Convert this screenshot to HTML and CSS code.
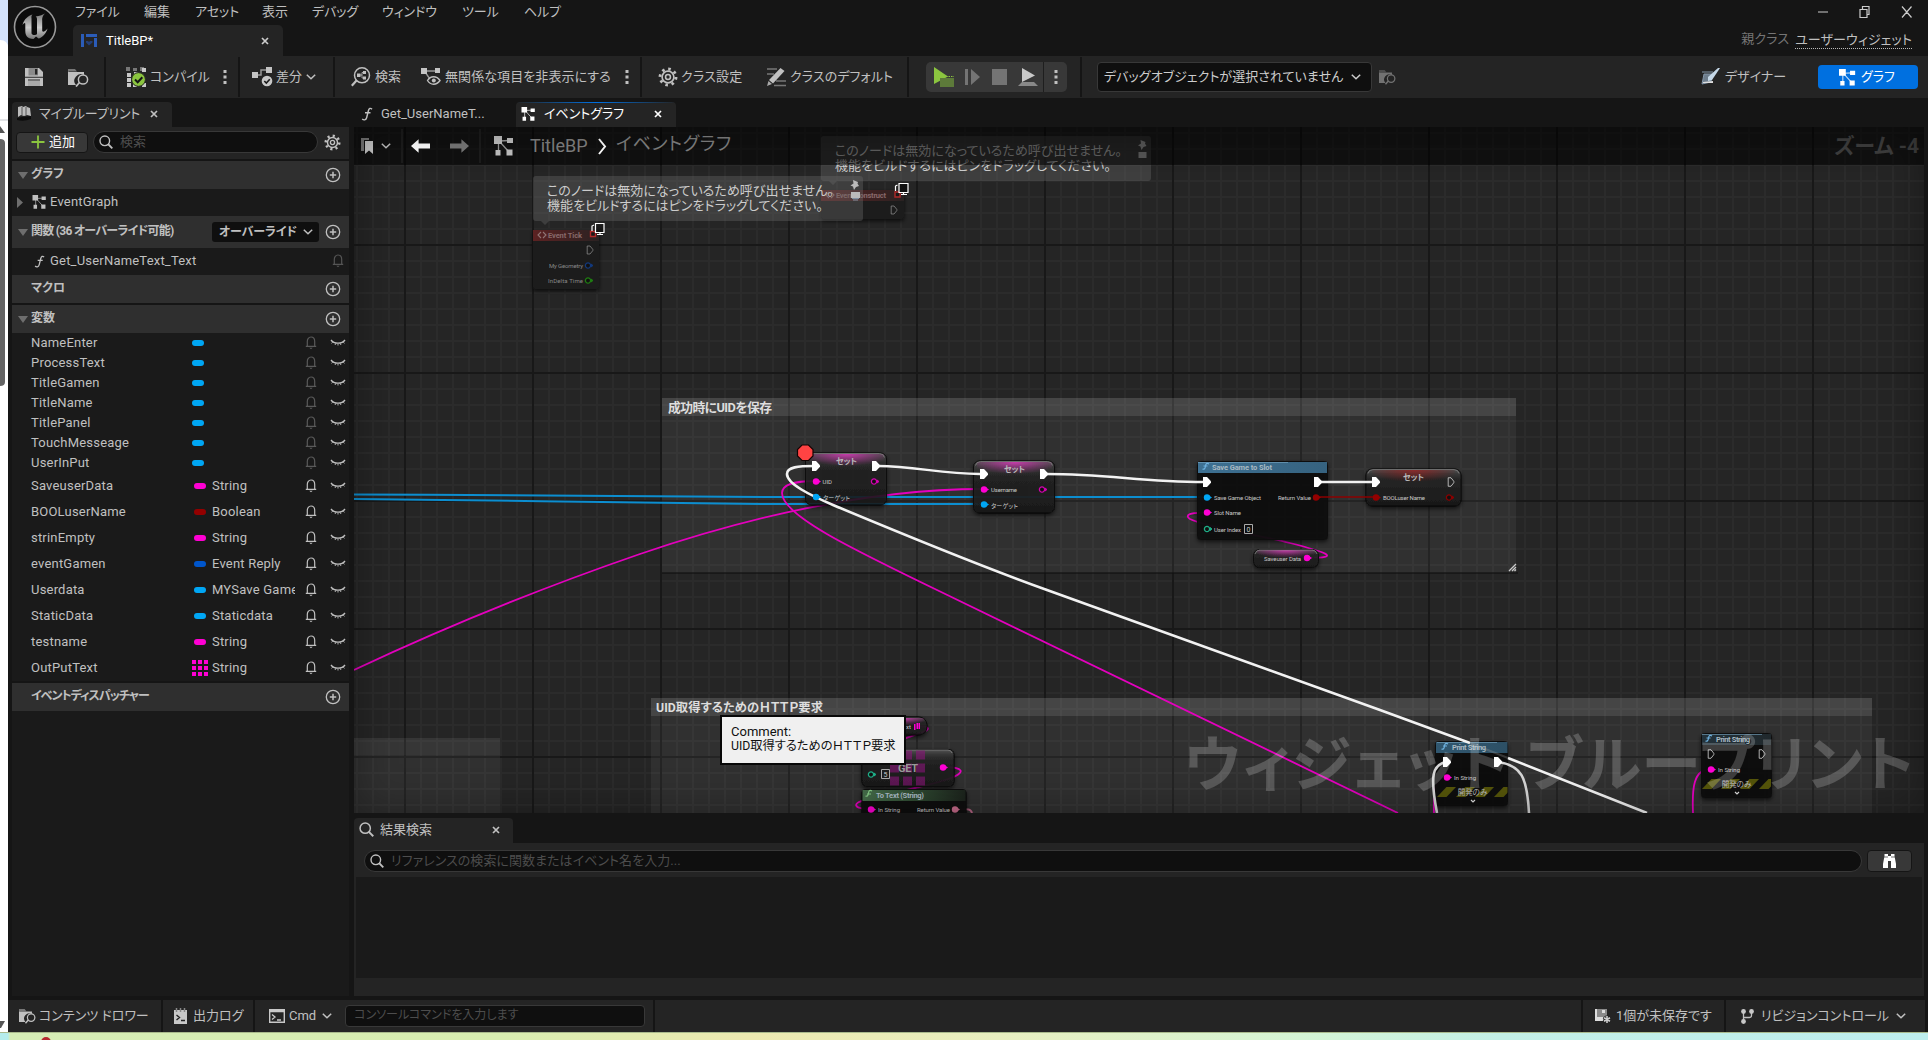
FILE: index.html
```html
<!DOCTYPE html>
<html lang="ja">
<head>
<meta charset="utf-8">
<title>TitleBP - ウィジェット ブループリント</title>
<link rel="stylesheet" href="styles.css">
</head>
<body>
<svg class="defs" width="0" height="0" aria-hidden="true">
  <symbol id="i-x" viewBox="0 0 8 8"><path d="M1 1l6 6M7 1L1 7" stroke="currentColor" stroke-width="1.7"/></symbol>
  <symbol id="i-chev" viewBox="0 0 10 6"><path d="M.8.8L5 4.8 9.200.8" fill="none" stroke="currentColor" stroke-width="1.5"/></symbol>
  <symbol id="i-dots" viewBox="0 0 4 16"><path d="M.5 1h3v3h-3zM.5 6.500h3v3h-3zM.5 12h3v3h-3z" fill="currentColor"/></symbol>
  <symbol id="i-graph" viewBox="0 0 20 20"><path d="M5 5L16 4.500M6 6l9 10M4.500 7v9" stroke="currentColor" stroke-width="1.300" opacity=".75"/><path d="M0 0h8v8H0zM13 2h6v5h-6zM12.500 13.500h6v6h-6zM1.500 14h5v5.500h-5z" fill="currentColor"/></symbol>
  <symbol id="i-search" viewBox="0 0 14 14"><circle cx="5.800" cy="5.800" r="4.800" fill="none" stroke="currentColor" stroke-width="1.400"/><path d="M9 9l4.300 4.300" stroke="currentColor" stroke-width="1.800"/></symbol>
  <symbol id="i-gear" viewBox="0 0 18 18"><g fill="none" stroke="currentColor"><circle cx="9" cy="9" r="7.200" stroke-width="2.600" stroke-dasharray="2.300 3.350"/><circle cx="9" cy="9" r="5.300" stroke-width="1.500"/><circle cx="9" cy="9" r="2.200" stroke-width="1.400"/></g></symbol>
  <symbol id="i-plus" viewBox="0 0 16 16"><circle cx="8" cy="8" r="6.700" fill="none" stroke="currentColor" stroke-width="1.300"/><path d="M8 4.800v6.400M4.800 8h6.400" stroke="currentColor" stroke-width="1.500"/></symbol>
  <symbol id="i-bell" viewBox="0 0 12 14"><path d="M.8 10.300h10.400M2.300 10V5.500C2.300 3 3.700 1 6 1s3.700 2 3.700 4.500V10" fill="none" stroke="currentColor" stroke-width="1.200"/><path d="M4.300 11.800h3.400L6 13.300z" fill="currentColor"/></symbol>
  <symbol id="i-eye" viewBox="0 0 16 8"><path d="M1 1C4 5.200 12 5.200 15 1" fill="none" stroke="currentColor" stroke-width="1.300"/><path d="M2.600 3.200L1.600 4.400M5.600 4.600L5.100 6M8 5v1.500M10.400 4.600l.5 1.400M13.400 3.200l1 1.200" fill="none" stroke="currentColor" stroke-width=".9"/></symbol>
  <symbol id="i-floppy" viewBox="0 0 18 18"><path d="M0 0h14l4 4v14H0z" fill="currentColor"/><path d="M3.500 0h9.500v7.500H3.500z" fill="#8a8a8a"/><path d="M10 1h2.300v5.500H10z" fill="#242424"/><path d="M0 9.300h18M3 12h12" stroke="#242424" stroke-width="1.100"/><path d="M3 13h12v5H3z" fill="#aaa"/></symbol>
  <symbol id="i-folder" viewBox="0 0 21 19"><path d="M0 1h7l2 2.500H1L0 5z" fill="#777"/><path d="M0 4h16v3a6.500 6.500 0 00-8 10H0z" fill="currentColor"/><circle cx="15" cy="11.500" r="4.600" fill="none" stroke="currentColor" stroke-width="1.500"/><path d="M11.500 14.500L8 18.500" stroke="currentColor" stroke-width="1.800"/></symbol>
  <symbol id="i-f" viewBox="0 0 12 14"><path d="M11 2.300C9.500.6 8 1.200 7.300 4L5.700 10.500C5 13.300 2.700 13.400 1.200 12M4 5.800h5.500" fill="none" stroke="currentColor" stroke-width="1.400"/></symbol>
  <symbol id="i-down" viewBox="0 0 10 7"><path d="M0 0h10L5 7z" fill="#6e6e6e"/></symbol>
  <symbol id="i-check" viewBox="0 0 10 10"><path d="M2.300 5l2 2.100L7.800 3.200" fill="none" stroke="#1a1a1a" stroke-width="1.600"/></symbol>
  <symbol id="i-arrow" viewBox="0 0 20 14"><path d="M0 7L8 0v4.300h12v5.400H8V14z" fill="currentColor"/></symbol>
</svg>

<div class="desktop">
  <div class="behind">
    <svg width="8" height="1032" viewBox="0 0 8 1032"><path d="M0 0h8v1032H0z" fill="#d3e2fc"/><path d="M0 40q8 0 8 8v984H0z" fill="#fff"/><path d="M0 120h8" stroke="#c4c7cc"/><path d="M0 126l5 7H0z" fill="#555"/><path d="M0 139q5 0 5 4v239q0 4-5 4z" fill="#636363"/><path d="M0 1021h5l-4 7H0z" fill="#555"/></svg>
  </div>
  <div class="app">
    <header class="titlebar">
      <svg class="logo" viewBox="0 0 44 44"><defs><linearGradient id="lg" x1="0" y1="0" x2="0" y2="1"><stop offset="0" stop-color="#777"/><stop offset=".55" stop-color="#ccc"/><stop offset="1" stop-color="#777"/></linearGradient></defs><circle cx="22" cy="22" r="20.500" fill="#0c0c0c" stroke="#999" stroke-width="1.600"/><path d="M9.500 20C11 14 15.500 10.500 19.500 9.500c-1.500 1.500-1 2.500-1 4V28c0 2.500 4.500 2.500 5.500 1V14c0-2-1.500-2.500-1.500-2.500 4-.5 8-2 9.500-3-3 3-2.800 5-2.800 7v10c0 2 2.500 1.500 5.300-2-1 5-6 9.500-9 10L23 31.500 20.500 34C14 34 12.300 30 12.300 26v-7c0-2-1.600-1-2.800 1z" fill="url(#lg)"/></svg>
      <div class="titlecol">
        <nav class="menu"><span style="width:69px">ファイル</span><span style="width:51px">編集</span><span style="width:67px">アセット</span><span style="width:50px">表示</span><span style="width:70px">デバッグ</span><span style="width:80px">ウィンドウ</span><span style="width:62px">ツール</span><span>ヘルプ</span></nav>
        <div class="doctab">
          <svg width="16" height="13" viewBox="0 0 16 13"><path d="M0 0h3v13H0zM5 0h11v3H5zM13 4h3v9h-3z" fill="#2b5cb8"/><path d="M8 11.500L5 8.500V7h2l1 1 1-1h2.500v1.500z" fill="#243f78"/></svg>
          <span class="name">TitleBP*</span>
          <svg class="x" width="8" height="8"><use href="#i-x"/></svg>
        </div>
      </div>
      <div class="winside">
        <svg class="winbtns" width="96" height="14" viewBox="0 0 96 14"><g fill="none" stroke="#ccc" stroke-width="1.200"><path d="M0 7h10M42 4.500h7v8h-7zM44.500 4V1.500h6.500v8h-2M84 1.500l9.500 11M93.500 1.500L84 12.500"/></g></svg>
        <div class="parent"><span class="dim">親クラス</span><span class="link">ユーザーウィジェット</span></div>
      </div>
    </header>

    <div class="toolbar">
      <div class="sec s1"><svg width="18" height="18"><use href="#i-floppy"/></svg><svg width="21" height="19"><use href="#i-folder"/></svg></div>
      <div class="sec s2">
        <svg width="21" height="20" viewBox="0 0 21 20"><path d="M0 0h4v4H0zM14 0h4v4h-4zM7 1h4v3H7z" fill="#777"/><path d="M16 1h4v4h-4zM8 5h4v4H8zM1 6h4v4H1zM1 11h4v4H1zM1 16h4v4H1zM16 16h4v4h-4zM7 16h4v4H7z" fill="#c8c8c8"/><circle cx="12.500" cy="12.500" r="6.900" fill="#8bc53f" stroke="#242424"/><path d="M9 12.500l2.700 2.700 4.600-5" fill="none" stroke="#151515" stroke-width="2"/></svg>
        <span class="t compile">コンパイル</span><svg width="4" height="16"><use href="#i-dots"/></svg>
      </div>
      <div class="sec s3">
        <svg width="21" height="20" viewBox="0 0 21 20"><path d="M5 8h4V3h6" fill="none" stroke="#999" stroke-width="1.500"/><path d="M0 5h6v6H0zM14 0h6v6h-6z" fill="#c4c4c4"/><circle cx="15" cy="14" r="5.300" fill="#c8c8c8"/><use href="#i-check" x="10" y="9" width="10" height="10"/></svg>
        <span class="t diff">差分</span><svg width="10" height="6"><use href="#i-chev"/></svg>
      </div>
      <div class="sec s4">
        <svg width="20" height="20" viewBox="0 0 20 20"><circle cx="11" cy="8.300" r="7.500" fill="none" stroke="currentColor" stroke-width="1.500"/><path d="M5.500 13.500L.8 18.800" stroke="currentColor" stroke-width="2.200"/><path d="M6 6.500h3.500v3.500H6zM12 4h3v3h-3zM12 9.500h3v3h-3z" fill="currentColor"/><path d="M9 8h2V5.500h2M11 8v3h2" fill="none" stroke="currentColor" stroke-width=".8"/></svg>
        <span class="t find">検索</span>
        <svg width="20" height="18" viewBox="0 0 20 18"><path d="M4 3h12M4 4l5 7" stroke="#999" stroke-width="1.300"/><path d="M0 0h6v6H0zM14 0h5v5h-5z" fill="#c4c4c4"/><path d="M6.500 12.500c3-5 9-5 12.500 0-3.500 5-9.500 5-12.500 0z" fill="none" stroke="currentColor" stroke-width="1.400"/><circle cx="12.800" cy="12.500" r="2" fill="currentColor"/></svg>
        <span class="t hide">無関係な項目を非表示にする</span><svg width="4" height="16"><use href="#i-dots"/></svg>
      </div>
      <div class="sec s5">
        <svg width="20" height="20"><use href="#i-gear"/></svg><span class="t cset">クラス設定</span>
        <svg width="20" height="20" viewBox="0 0 20 20"><path d="M0 2h10M0 7h7M7 18.500h12M9 14h10" stroke="#777" stroke-width="1.300"/><path d="M2 13L13.500 1l4 3L6 16.500z" fill="currentColor"/><path d="M1.500 14l3.500 3-5 2z" fill="#aaa"/></svg><span class="t cdef">クラスのデフォルト</span>
      </div>
      <div class="sec s6"><div class="play">
        <svg width="20" height="20" viewBox="0 0 20 20"><path d="M0 0l14 9.500L0 17z" fill="#8bc53f"/><path d="M6 11h14v9H6z" fill="#5d7a3a"/><path d="M12 9.500h8" stroke="#8bc53f" stroke-dasharray="1.500 1"/></svg>
        <svg width="15" height="18" viewBox="0 0 15 18"><path d="M0 1h3v16H0zM6 1l9 8-9 8z" fill="#747474"/></svg>
        <svg width="15" height="16"><path d="M0 0h15v16H0z" fill="#747474"/></svg>
        <svg width="20" height="18" viewBox="0 0 20 18"><path d="M4 0l13 7.500L4 14z" fill="#c8c8c8"/><path d="M4 14h12l4 4H0z" fill="#888"/></svg>
        <i></i><svg width="4" height="16"><use href="#i-dots"/></svg>
      </div></div>
      <div class="sec s7">
        <div class="debug"><span>デバッグオブジェクトが選択されていません</span><svg width="10" height="6"><use href="#i-chev"/></svg></div>
        <svg class="faded" width="17" height="16"><use href="#i-folder"/></svg>
        <div class="modes">
          <svg width="20" height="18" viewBox="0 0 20 18"><path d="M1 4h11M3 6h8l-1 8-9 2z" stroke="#8396a8" fill="#6d7d8c"/><path d="M7 9L17 0h2l-8 12-4 1z" fill="#c5d8e8"/><path d="M2 14l10-1v2H2z" fill="#ddd"/></svg><span class="t">デザイナー</span>
          <div class="graphbtn"><svg width="19" height="17"><use href="#i-graph"/></svg><span>グラフ</span></div>
        </div>
      </div>
    </div>

    <main class="body">
      <aside class="left">
        <div class="paneltab"><svg width="15" height="15" viewBox="0 0 15 15"><path d="M1 1l4-1 1 1 3-1 1 1 3 1 1 8-4-1-3 1-3-1-3 2z" fill="#bbb"/><path d="M5 1v8M9 1v8" stroke="#555"/><path d="M0 12l5-1 9-1v3q-7 3-14 1z" fill="#0c0c0c"/></svg><span>マイブループリント</span><svg width="8" height="8"><use href="#i-x"/></svg></div>
        <div class="addrow">
          <div class="add"><svg width="14" height="14" viewBox="0 0 14 14"><path d="M7 .5v13M.5 7h13" stroke="#8bc53f" stroke-width="1.800"/></svg><span>追加</span></div>
          <div class="search"><svg width="14" height="14"><use href="#i-search"/></svg><span>検索</span></div>
          <svg width="17" height="17"><use href="#i-gear"/></svg>
        </div>
        <div class="head"><svg width="10" height="7"><use href="#i-down"/></svg><b>グラフ</b><svg width="16" height="16"><use href="#i-plus"/></svg></div>
        <div class="item"><svg width="6" height="11" viewBox="0 0 6 11"><path d="M0 0l6 5.500L0 11z" fill="#6e6e6e"/></svg><svg class="gi" width="15" height="14"><use href="#i-graph"/></svg><span>EventGraph</span></div>
        <div class="head fn"><svg width="10" height="7"><use href="#i-down"/></svg><b>関数 (36 オーバーライド可能)</b><div class="override">オーバーライド<svg width="10" height="6"><use href="#i-chev"/></svg></div><svg width="16" height="16"><use href="#i-plus"/></svg></div>
        <div class="item fnrow"><svg class="fi" width="11" height="13"><use href="#i-f"/></svg><span>Get_UserNameText_Text</span><svg class="bell" width="12" height="14"><use href="#i-bell"/></svg></div>
        <div class="head nude"><b>マクロ</b><svg width="16" height="16"><use href="#i-plus"/></svg></div>
        <div class="head gap"><svg width="10" height="7"><use href="#i-down"/></svg><b>変数</b><svg width="16" height="16"><use href="#i-plus"/></svg></div>
        <ul class="vars widgets">
          <li><span>NameEnter</span><i class="obj"></i><em></em><svg class="bell"><use href="#i-bell"/></svg><svg class="eye"><use href="#i-eye"/></svg></li>
          <li><span>ProcessText</span><i class="obj"></i><em></em><svg class="bell"><use href="#i-bell"/></svg><svg class="eye"><use href="#i-eye"/></svg></li>
          <li><span>TitleGamen</span><i class="obj"></i><em></em><svg class="bell"><use href="#i-bell"/></svg><svg class="eye"><use href="#i-eye"/></svg></li>
          <li><span>TitleName</span><i class="obj"></i><em></em><svg class="bell"><use href="#i-bell"/></svg><svg class="eye"><use href="#i-eye"/></svg></li>
          <li><span>TitlePanel</span><i class="obj"></i><em></em><svg class="bell"><use href="#i-bell"/></svg><svg class="eye"><use href="#i-eye"/></svg></li>
          <li><span>TouchMesseage</span><i class="obj"></i><em></em><svg class="bell"><use href="#i-bell"/></svg><svg class="eye"><use href="#i-eye"/></svg></li>
          <li><span>UserInPut</span><i class="obj"></i><em></em><svg class="bell"><use href="#i-bell"/></svg><svg class="eye"><use href="#i-eye"/></svg></li>
        </ul>
        <ul class="vars typed">
          <li><span>SaveuserData</span><i class="str"></i><em>String</em><svg class="bell"><use href="#i-bell"/></svg><svg class="eye"><use href="#i-eye"/></svg></li>
          <li><span>BOOLuserName</span><i class="bool"></i><em>Boolean</em><svg class="bell"><use href="#i-bell"/></svg><svg class="eye"><use href="#i-eye"/></svg></li>
          <li><span>strinEmpty</span><i class="str"></i><em>String</em><svg class="bell"><use href="#i-bell"/></svg><svg class="eye"><use href="#i-eye"/></svg></li>
          <li><span>eventGamen</span><i class="struct"></i><em>Event Reply</em><svg class="bell"><use href="#i-bell"/></svg><svg class="eye"><use href="#i-eye"/></svg></li>
          <li><span>Userdata</span><i class="obj"></i><em>MYSave Game</em><svg class="bell"><use href="#i-bell"/></svg><svg class="eye"><use href="#i-eye"/></svg></li>
          <li><span>StaticData</span><i class="obj"></i><em>Staticdata</em><svg class="bell"><use href="#i-bell"/></svg><svg class="eye"><use href="#i-eye"/></svg></li>
          <li><span>testname</span><i class="str"></i><em>String</em><svg class="bell"><use href="#i-bell"/></svg><svg class="eye"><use href="#i-eye"/></svg></li>
          <li><span>OutPutText</span><svg class="arr" width="16" height="16" viewBox="0 0 16 16"><path d="M0 2h16M0 8h16M0 14h16" stroke="#ff00d4" stroke-width="4" stroke-dasharray="4 2"/></svg><em>String</em><svg class="bell"><use href="#i-bell"/></svg><svg class="eye"><use href="#i-eye"/></svg></li>
        </ul>
        <div class="head gap nude disp"><b>イベントディスパッチャー</b><svg width="16" height="16"><use href="#i-plus"/></svg></div>
        <div class="rest"></div>
      </aside>

      <section class="right">
        <div class="tabs">
          <div class="gtab"><svg width="12" height="14"><use href="#i-f"/></svg><span>Get_UserNameT...</span></div>
          <div class="gtab on"><svg width="15" height="14"><use href="#i-graph"/></svg><span>イベントグラフ</span><svg width="8" height="8"><use href="#i-x"/></svg></div>
        </div>
        <div class="graph">
          <svg class="canvas" width="1570" height="686" viewBox="354 127 1570 686">
            <defs>
              <pattern id="minor" x="4" y="4" width="16" height="16" patternUnits="userSpaceOnUse"><path d="M1 0v16M0 1h16" stroke="#2b2b2b" stroke-width="2"/></pattern>
              <pattern id="major" x="20" y="116" width="128" height="128" patternUnits="userSpaceOnUse"><path d="M1 0v128M0 1h128" stroke="#181818" stroke-width="2"/></pattern>
              <pattern id="hazard" width="19" height="10" patternUnits="userSpaceOnUse"><path d="M9.500 0H19L9.500 10H0z" fill="#55550a"/></pattern>
              <linearGradient id="gloss" x1="0" y1="0" x2="0" y2="1"><stop offset="0" stop-color="#5a5a5a"/><stop offset=".12" stop-color="#3c3c3c"/><stop offset=".3" stop-color="#242424"/><stop offset="1" stop-color="#191919"/></linearGradient>
              <linearGradient id="blue"><stop offset="0" stop-color="#3d7092"/><stop offset=".6" stop-color="#2b4c60"/><stop offset="1" stop-color="#20282c"/></linearGradient>
              <linearGradient id="green"><stop offset="0" stop-color="#456d4a"/><stop offset=".5" stop-color="#2f4a32"/><stop offset="1" stop-color="#1c231c"/></linearGradient>
              <linearGradient id="redh"><stop offset="0" stop-color="#5c2323"/><stop offset="1" stop-color="#2b2020"/></linearGradient>
              <radialGradient id="pinkg" cx=".5" cy="0" r=".6"><stop offset="0" stop-color="#e637c4" stop-opacity=".8"/><stop offset="1" stop-color="#c72fa8" stop-opacity="0"/></radialGradient>
              <radialGradient id="redg" cx=".5" cy="0" r=".55"><stop offset="0" stop-color="#a02020" stop-opacity=".75"/><stop offset="1" stop-color="#801010" stop-opacity="0"/></radialGradient>
              <linearGradient id="mon" x1="0" y1="0" x2="1" y2="1"><stop offset="0" stop-color="#777"/><stop offset=".5" stop-color="#111"/></linearGradient>
              <path id="exec" d="M-4-5H0L4-.8V.8L0 5h-4z"/>
              <g id="pin"><circle r="3.200"/><path d="M2-2L5 0 2 2z"/></g>
              <g id="ring"><circle r="2.600" fill="#111" stroke-width="1.300"/><path d="M3-1.500L5 0 3 1.500z"/></g>
              <filter id="sh" x="-20%" y="-20%" width="140%" height="150%"><feDropShadow dx="0" dy="2" stdDeviation="2" flood-color="#000" flood-opacity=".7"/></filter>
            </defs>
            <path d="M354 127h1570v686H354z" fill="#252525"/>
            <path d="M354 127h1570v686H354z" fill="url(#minor)"/>
            <path d="M354 127h1570v686H354z" fill="url(#major)"/>

            <g fill="#fff">
              <path fill-opacity=".055" d="M662 416h854v157H662zM651 716h1221v97H651zM354 755h146v58H354z"/>
              <path fill-opacity=".15" d="M662 398h854v18H662zM651 698h1221v18H651z"/>
              <path fill-opacity=".08" d="M354 738h146v17H354z"/>
            </g>
            <path d="M662 573h856" stroke="#111" stroke-opacity=".6" stroke-width="2"/>
            <path d="M1509 571l7-7M1512 571l4-4M1514.500 571l1.500-1.500" stroke="#ccc" stroke-width="1.300"/>
            <g class="ctitle"><text x="668" y="411.500" textLength="104">成功時にUIDを保存</text><text x="656" y="711.500" textLength="167" class="c12">UID取得するためのＨＴＴＰ要求</text></g>

            <g filter="url(#sh)">
              <rect x="821" y="190" width="83" height="29" rx="2" fill="#1a1c1a"/><path d="M821 190h83v11h-83z" fill="url(#redh)"/>
              <rect x="533" y="230" width="66" height="59" rx="2" fill="#1a1c1a"/><path d="M533 230h66v11h-66z" fill="url(#redh)"/>
            </g>
            <g fill="none" stroke="#8f7474" stroke-width="1.100"><path d="M829 192l-3 3 3 3M831 192l3 3-3 3M541 232l-3 3 3 3M543 232l3 3-3 3"/></g>
            <g class="nt off"><text x="836" y="197.500" textLength="50">Event Construct</text><text x="548" y="237.500" textLength="34">Event Tick</text></g>
            <g class="pt off"><text x="549" y="268" textLength="34">My Geometry</text><text x="548" y="283" textLength="35">InDelta Time</text></g>
            <g fill="none" stroke="#999" stroke-width=".9"><use href="#exec" transform="translate(894 210) scale(.7 .8)"/><use href="#exec" transform="translate(590 250) scale(.7 .8)"/></g>
            <use href="#ring" x="588" y="265.500" stroke="#12397c" fill="#12397c"/><use href="#ring" x="588" y="280.500" stroke="#1f7d12" fill="#1f7d12"/>
            <g fill="#191919" stroke="#b02a2a" stroke-width="1.400"><path d="M895 192h5v5h-5zM590.500 231.500h5v5h-5z"/></g>
            <g fill="url(#mon)" stroke="#fff" stroke-width="1.200"><path d="M899 183.500h9v9h-9zM595.500 223.500h8.500v9h-8.500z"/><path d="M897.500 185l-2 1v5M594 225l-2 1v5M901 194.500h6M597 234.500h6M903.500 192.500v2M600 232.500v2" fill="none"/></g>

            <g fill="none" stroke="#0c8ed0" stroke-width="2"><path d="M354 494.500C500 495 650 496 780 497H1207M354 499C480 500 640 503 760 504H984"/></g>
            <g fill="none" stroke="#e400be" stroke-width="1.800">
              <path d="M354 670Q492 605 640 554C740 520 860 489 984 489"/>
              <path d="M815 481C795 481 782 485 782 493 782 515 850 548 937 590L1398 813"/>
              <path d="M1207 513C1190 512 1184 515 1190 519 1205 527 1260 535 1290 543 1325 552 1344 558 1307 558"/>
              <path d="M917 726c12 0 14 3 6 6-10 4-22 7-32 12M943 767c20 0 25 5 5 12-15 6-35 8-50 14M871 809c-20 0-18-7-5-9M1447 777c-10 0-14 10-13 36M1711 769c-18 0-19 20-18 44"/>
            </g>
            <path d="M955 809c14 0 16 0 17 4" fill="none" stroke="#b56584" stroke-width="2"/>

            <g filter="url(#sh)" stroke="#0d0d0d">
              <rect x="805.500" y="453" width="81" height="52" rx="6" fill="url(#gloss)" fill-opacity=".76"/>
              <rect x="973.500" y="461" width="81" height="52" rx="6" fill="url(#gloss)" fill-opacity=".86"/>
              <rect x="1366" y="469" width="95" height="37" rx="6" fill="url(#gloss)" fill-opacity=".9"/>
              <rect x="1253.500" y="549.500" width="65" height="18" rx="6" fill="url(#gloss)" fill-opacity=".88"/>
              <rect x="880" y="717" width="47" height="18" rx="8" fill="url(#gloss)" fill-opacity=".88"/>
              <rect x="862" y="749.500" width="92" height="37" rx="5" fill="url(#gloss)" fill-opacity=".86"/>
              <rect x="1197.500" y="461.500" width="130" height="78" rx="3" fill="#10120f" fill-opacity=".9"/>
              <rect x="862" y="789.500" width="104" height="40" rx="3" fill="#10120f" fill-opacity=".92"/>
              <rect x="1435.500" y="741.500" width="72" height="64" rx="3" fill="#10120f" fill-opacity=".95"/>
              <rect x="1701.500" y="733.500" width="70" height="64" rx="3" fill="#10120f" fill-opacity=".95"/>
            </g>
            <rect x="809" y="454" width="75" height="20" fill="url(#pinkg)"/><rect x="977" y="462" width="75" height="20" fill="url(#pinkg)"/><rect x="1257" y="550" width="58" height="13" fill="url(#pinkg)"/><rect x="882" y="718" width="42" height="12" fill="url(#pinkg)"/><rect x="1372" y="470" width="83" height="22" fill="url(#redg)"/>
            <g fill="none" stroke="#888" stroke-opacity=".7"><path d="M807.500 457.500q1-4 5-4h67q4 0 5 4M975.500 465.500q1-4 5-4h67q4 0 5 4M1368 473.500q1-4 5-4h81q4 0 5 4M1255 554q1-4 5-4h52q4 0 5 4M864 753q1-3 4-3h80q3 0 4 3"/></g>
            <path d="M1198 462h129v11h-129zM1436 742h71.500v11h-71.500zM1702 734h69v11h-69z" fill="url(#blue)"/><path d="M1198 462.500h90M1437 742.500h60M1702 734.500h60" stroke="#79a8c4" stroke-opacity=".6"/>
            <path d="M862.500 790h103v11h-103z" fill="url(#green)"/>
            <path d="M890 755h35M890 768h35M890 781h35" stroke="#8a1579" stroke-opacity=".6" stroke-width="9" stroke-dasharray="9 4"/>
            <path transform="translate(1437 787)" d="M0 0h70.500v10H0z" fill="url(#hazard)"/><path transform="translate(1702 779)" d="M0 0h69v10H0z" fill="url(#hazard)"/>

            <g fill="none" stroke="#f2f2f2" stroke-width="2.600">
              <path d="M815 466C798 466 787 467 787 474 787 484 810 495 833 505 900 533 980 566 1047 590L1380 710 1470 743M1508 758L1647 813"/>
              <path d="M878 466C915 466 940 474 980 474M1046 474C1110 474 1140 482 1204 482M1320 482h52" stroke-width="2.400"/>
              <path d="M1446 762c-14 3-16 14-9 51M1499 762c22 4 28 14 30 51" stroke="#d5d5d5"/>
            </g>
            <path d="M1319 497h54" stroke="#8b0000" stroke-width="1.600"/>
            <path d="M1470 743l38 15" stroke="#999" stroke-opacity=".3" stroke-width="2"/>

            <g fill="#fff"><use href="#exec" x="816" y="466"/><use href="#exec" x="876" y="466"/><use href="#exec" x="984" y="474"/><use href="#exec" x="1044" y="474"/><use href="#exec" x="1207" y="482"/><use href="#exec" x="1318" y="482"/><use href="#exec" x="1376" y="482"/><use href="#exec" x="1447" y="762"/><use href="#exec" x="1498" y="762"/></g>
            <g fill="none" stroke="#ddd"><use href="#exec" transform="translate(1451 482) scale(.7 .85)"/><use href="#exec" transform="translate(1711 754) scale(.7 .85)"/><use href="#exec" transform="translate(1762 754) scale(.7 .85)"/></g>
            <g fill="#ff00d4"><use href="#pin" x="816" y="481.500"/><use href="#pin" x="984" y="489.500"/><use href="#pin" x="1207" y="512.500"/><use href="#pin" x="1307" y="558"/><use href="#pin" x="943" y="767.500"/><use href="#pin" x="871" y="809.500"/><use href="#pin" x="1447" y="777.500"/><use href="#pin" x="1711" y="769.500"/></g>
            <path d="M914 724h1.500v6H914zM916.500 723h1.500v6h-1.500zM918.500 723h1.500v6h-1.500z" fill="#ff00d4"/>
            <g fill="#00a6f4"><use href="#pin" x="816" y="497"/><use href="#pin" x="984" y="504.500"/><use href="#pin" x="1207" y="497.500"/></g>
            <g fill="#940000"><use href="#pin" x="1316" y="497.500"/><use href="#pin" x="1376" y="497.500"/></g><use href="#pin" x="955" y="809.500" fill="#c56a8a"/>
            <g stroke="#d400b0" fill="#d400b0"><use href="#ring" x="874" y="481.500"/><use href="#ring" x="1042" y="489.500"/></g><use href="#ring" x="1449" y="497.500" stroke="#8b0000" fill="#8b0000"/>
            <g stroke="#1fb089" fill="#1fb089"><use href="#ring" x="1207" y="529"/><use href="#ring" x="871" y="774.500"/></g>
            <path d="M1244.500 524.500h8v9h-8zM881.500 769.500h8v9h-8z" fill="none" stroke="#aaa"/>

            <g class="st"><text x="846.500" y="463.500">セット</text><text x="1014.500" y="471.500">セット</text><text x="1413.500" y="479.500">セット</text></g>
            <g class="nt"><text x="1212" y="469.500" textLength="60">Save Game to Slot</text><text x="876" y="797.500" textLength="48">To Text (String)</text><text x="1452" y="749.500" textLength="34">Print String</text><text x="1716" y="741.500" textLength="34">Print String</text></g>
            <g class="pt"><text x="822.500" y="484">UID</text><text x="823" y="499.500" textLength="27">ターゲット</text><text x="991" y="492" textLength="26">Username</text><text x="991" y="507.500" textLength="27">ターゲット</text><text x="1214" y="500" textLength="47">Save Game Object</text><text x="1278" y="500" textLength="33">Return Value</text><text x="1214" y="515" textLength="27">Slot Name</text><text x="1214" y="532" textLength="27">User Index</text><text x="1246.500" y="531.500" class="val">0</text><text x="1264" y="561" textLength="37">Saveuser Data</text><text x="1383" y="500" textLength="42">BOOLuser Name</text><text x="883.500" y="776.500" class="val">5</text><text x="906" y="729">xt</text><text x="878" y="812" textLength="22">In String</text><text x="917" y="812" textLength="33">Return Value</text><text x="1454" y="780" textLength="22">In String</text><text x="1718" y="772" textLength="22">In String</text></g>
            <text x="898" y="772" class="get" textLength="20">GET</text>
            <g class="dev"><text x="1472.500" y="795">開発のみ</text><text x="1736.500" y="787">開発のみ</text></g>
            <path d="M1471 800l2 2 2-2M1735 792l2 2 2-2" fill="none" stroke="#ddd" stroke-width="1.200"/>
            <g fill="none" stroke="#6fb2e0" stroke-width="1.200"><path d="M1209 464q-3-2-3.500 2t-3 3M1203.500 466h4M1448 744q-3-2-3.500 2t-3 3M1443 746h4M1712 736q-3-2-3.500 2t-3 3M1706.500 738h4"/><path d="M872 791q-3-2-3.500 2t-3 3M867 794h4" stroke="#85c785"/></g>
            <path d="M802 445h6.500l4.500 4.500v6.500l-4.500 4.500H802l-4.500-4.500v-6.500z" fill="#ff4343" stroke="#140404" stroke-width="1.200"/>

            <g class="bub"><rect x="821" y="136" width="330" height="45" rx="3"/><path d="M829 181h8l-4 4z"/><rect x="533" y="176" width="330" height="45" rx="3"/><path d="M541 221h8l-4 4z"/></g>
            <g class="bt"><text x="835" y="155">このノードは無効になっているため呼び出せません。</text><text x="835" y="170">機能をビルドするにはピンをドラッグしてください。</text><text x="547" y="195">このノードは無効になっているため呼び出せません。</text><text x="547" y="210">機能をビルドするにはピンをドラッグしてください。</text></g>
            <g fill="#bbb"><path id="pn" d="M853 180l5 2-.5 1.500 1.500 2.500-3 1-2 3-1-3.500-2.500-1 3-2z"/><path d="M851 192h9v6h-9z"/><path d="M852 198.500h7M853 200h5" stroke="#8090a0"/><use href="#pn" x="287.500" y="-40"/><path d="M1138.500 152h8v6h-8z"/></g>

            <text class="wm" x="1184" y="786" textLength="730">ウィジェット ブループリント</text>
          </svg>
          <div class="crumbs">
            <svg class="bm" width="12" height="16" viewBox="0 0 12 16"><path d="M0 0h8v2H3v11H0z" fill="#777"/><path d="M4 3h8v13l-4-3.500L4 16z" fill="#c8c8c8"/></svg>
            <svg class="ch" width="10" height="6"><use href="#i-chev"/></svg><i></i>
            <svg class="back" width="19" height="14"><use href="#i-arrow"/></svg><svg class="fwd" width="19" height="14"><use href="#i-arrow"/></svg><i class="b"></i>
            <svg class="gr" width="22" height="20"><use href="#i-graph"/></svg>
            <span class="c1">TitleBP</span><svg class="sep" width="9" height="17" viewBox="0 0 9 17"><path d="M1 1l6 7.500L1 16" fill="none" stroke="#fff" stroke-width="2"/></svg><span class="c2">イベントグラフ</span>
            <span class="zoom">ズーム -4</span>
          </div>
          <div class="tip">Comment:<br><span>UID取得するためのＨＴＴＰ要求</span></div>
        </div>
        <div class="results">
          <div class="rtab"><svg width="15" height="15"><use href="#i-search"/></svg><span>結果検索</span><svg width="8" height="8"><use href="#i-x"/></svg></div>
          <div class="rbody">
            <div class="rbar"><div class="rsearch"><svg width="14" height="14"><use href="#i-search"/></svg><span>リファレンスの検索に関数またはイベント名を入力...</span></div><div class="bino"><svg width="13" height="14" viewBox="0 0 13 14"><path d="M1.500 0H5v2h3V0h3.500v2L13 10v4H8V7H5v7H0v-4l1.500-8z" fill="#fff"/><path d="M1 3h4M8 3h4" stroke="#333" stroke-width=".7"/></svg></div></div>
            <div class="rlist"></div>
          </div>
        </div>
      </section>
    </main>

    <footer class="status">
      <div class="cell c-drawer"><svg width="17" height="16"><use href="#i-folder"/></svg><span>コンテンツ ドロワー</span></div>
      <div class="cell c-log"><svg width="13" height="16" viewBox="0 0 13 16"><path d="M0 2h13v14H0z" fill="#c8c8c8"/><path d="M2.500 0v4M6.500 0v4M10.500 0v4" stroke="#888" stroke-width="1.500"/><path d="M2.500 7l3 2.500-3 2.500M7 12.500h4" fill="none" stroke="#222" stroke-width="1.400"/></svg><span>出力ログ</span></div>
      <div class="cell c-cmd"><svg width="16" height="14" viewBox="0 0 16 14"><path d="M.7.700h14.600v12.600H.7z" fill="none" stroke="#c8c8c8" stroke-width="1.400"/><path d="M1 2h14" stroke="#c8c8c8" stroke-width="2.500"/><path d="M3 5.500l3 2.500-3 2.500M8 11h4" fill="none" stroke="#c8c8c8" stroke-width="1.300"/></svg><span>Cmd</span><svg width="10" height="6"><use href="#i-chev"/></svg><div class="cmdin">コンソールコマンドを入力します</div></div>
      <div class="cell grow"></div>
      <div class="cell c-save"><svg width="16" height="15" viewBox="0 0 16 15"><path d="M0 0h12v12H0z" fill="#8a8a8a"/><path d="M2 8h6v4H2zM7 1h3v3H7zM0 0h2v12H0z" fill="#ddd"/><path d="M12 6.500v8M8.500 8.500l7 4M15.500 8.500l-7 4" stroke="#242424" stroke-width="3"/><path d="M12 7v7M9 8.700l6 3.600M15 8.700l-6 3.600" stroke="#ccc" stroke-width="1.600"/></svg><span>1個が未保存です</span></div>
      <div class="cell c-rev"><svg width="13" height="15" viewBox="0 0 13 15"><path d="M2.500 3v9M2.500 8.500h6q2 0 2-2V3" fill="none" stroke="#c0c0c0" stroke-width="1.300"/><circle cx="2.500" cy="2.500" r="2.400" fill="#c8c8c8"/><circle cx="10.500" cy="2.500" r="2.400" fill="#c8c8c8"/><circle cx="2.500" cy="12.500" r="2.400" fill="#c8c8c8"/></svg><span>リビジョンコントロール</span><svg width="10" height="6"><use href="#i-chev"/></svg></div>
    </footer>
  </div>
  <div class="taskbar"><i></i></div>
</div>
</body>
</html>
```
FILE: styles.css
```css
* { box-sizing: border-box; }
body {
  margin: 0;
  width: 1928px;
  height: 1040px;
  overflow: hidden;
  background: #151515;
  color: #c0c0c0;
  font: 13px/16px Roboto, "Noto Sans CJK JP", sans-serif;
  font-feature-settings: "palt";
  white-space: nowrap;
}
svg { display: block; flex: none; }
.defs { position: absolute; }
i, em { font-style: normal; }

.desktop { display: grid; grid-template: 1032px 8px / 8px 1920px; height: 1040px; }
.behind { overflow: hidden; }
.app { display: flex; flex-direction: column; background: #151515; min-width: 0; }
.taskbar {
  grid-column: 1 / 3;
  border-top: 1px solid #a9b98c;
  background: linear-gradient(90deg, #b5ecec 0 8px, #d6edb6 10px, #d8edb0 500px, #ece9b0 750px, #e8efc0 1000px, #d5f5d5 1300px, #c3f0e6 1500px, #bdeeee 1928px);
  overflow: hidden;
}
.taskbar i { display: block; width: 10px; height: 10px; margin: 4px 0 0 41px; border-radius: 5px; background: #b5292f; }

/* title bar */
.titlebar { display: flex; height: 56px; }
.logo { width: 44px; height: 44px; margin: 5px 0 0 5px; }
.titlecol { margin-left: 16px; width: 700px; display: flex; flex-direction: column; }
.menu { display: flex; height: 25px; padding: 4px 0 0 2px; letter-spacing: -.1px; }
.doctab { display: flex; align-items: center; width: 210px; height: 31px; padding-left: 8px; background: #242424; border-radius: 5px 5px 0 0; color: #fff; }
.doctab .name { width: 164px; padding-left: 9px; }
.doctab .x { color: #ccc; }
.winside { margin-left: auto; }
.winbtns { margin: 5px 14px 0 auto; }
.parent { display: flex; justify-content: flex-end; gap: 6px; margin: 12px 16px 0 0; letter-spacing: .1px; }
.parent .dim { color: #757575; }
.parent .link { border-bottom: 1px dotted #bbb; height: 18px; padding-top: 1px; }

/* toolbar */
.toolbar { display: flex; height: 42px; background: #242424; padding: 1px 0; }
.sec { display: flex; align-items: center; border-right: 2px solid #151515; }
.s1 { width: 98px; padding-left: 17px; gap: 25px; }
.s2 { width: 134px; padding-left: 20px; gap: 3px; }
.compile { width: 70px; }
.s3 { width: 95px; padding-left: 12px; gap: 3px; }
.diff { width: 27px; }
.s4 { width: 307px; padding-left: 16px; gap: 4px; }
.find { width: 42px; }
.hide { width: 176px; letter-spacing: .08px; }
.s5 { width: 267px; padding-left: 16px; gap: 3px; }
.cset { width: 83px; letter-spacing: .2px; }
.cdef { letter-spacing: .1px; }
.s6 { width: 173px; padding-left: 17px; }
.play { display: flex; align-items: center; width: 141px; height: 30px; background: #383838; border-radius: 5px; padding-left: 8px; }
.play svg:nth-child(2) { margin-left: 11px; }
.play svg:nth-child(3) { margin-left: 12px; }
.play svg:nth-child(4) { margin-left: 11px; }
.play i { width: 1px; height: 30px; background: #1e1e1e; margin: 0 10px 0 5px; }
.s7 { flex: 1; border: 0; padding-left: 15px; }
.debug { display: flex; align-items: center; width: 275px; height: 30px; padding: 0 10px 0 6px; background: #0f0f0f; border: 1px solid #383838; border-radius: 4px; justify-content: space-between; color: #ccc; letter-spacing: .05px; }
.faded { margin-left: 7px; opacity: .5; }
.modes { display: flex; align-items: center; gap: 4px; margin-left: auto; padding-right: 10px; }
.modes .t { width: 89px; }
.graphbtn { display: flex; align-items: center; gap: 4px; width: 100px; height: 24px; padding-left: 20px; background: #0070e0; border-radius: 4px; color: #fff; }

/* main split */
.body { display: flex; gap: 5px; height: 902px; padding: 4px; }
.left { width: 337px; display: flex; flex-direction: column; }
.paneltab { display: flex; align-items: center; width: 160px; height: 25px; padding: 0 0 2px 5px; background: #242424; border-radius: 4px 4px 0 0; flex: none; }
.paneltab span { width: 118px; padding-left: 7px; letter-spacing: -.2px; }
.addrow { display: flex; align-items: center; height: 32px; padding: 0 0 2px 4px; background: #242424; margin-bottom: 2px; flex: none; }
.add { display: flex; align-items: center; gap: 4px; width: 72px; height: 21px; padding-left: 14px; background: #383838; border: 1px solid #151515; border-radius: 4px; color: #fff; }
.search { display: flex; align-items: center; gap: 7px; width: 225px; height: 22px; margin: 0 6px 0 5px; padding-left: 5px; border: 1px solid #383838; border-radius: 11px; background: #0f0f0f; }
.search span, .rsearch span, .cmdin { color: #4d4d4d; }
.head { display: flex; align-items: center; height: 28px; padding: 0 8px 0 6px; background: #2f2f2f; flex: none; font-size: 12px; }
.head b { flex: 1; margin-left: 3px; font-weight: 700; padding-bottom: 2px; }
.head.fn { height: 32px; }
.head.fn b { letter-spacing: -.72px; }
.head.disp b { letter-spacing: -1.020px; }
.head.nude b { margin-left: 13px; }
.head.gap { margin-top: 2px; }
.override { display: flex; align-items: center; gap: 6px; width: 107px; height: 20px; margin-right: 6px; padding-left: 7px; background: #0f0f0f; border-radius: 3px; font-weight: 700; letter-spacing: -.1px; }
.item { display: flex; align-items: center; height: 27px; padding: 0 0 1px 5px; background: #1a1a1a; flex: none; letter-spacing: .2px; }
.gi { margin: 0 3px 0 9px; }
.fi { margin: 0 5px 0 17px; }
.item .bell { width: 12px; height: 14px; margin: 0 5px 0 auto; color: #555; }
.vars { list-style: none; margin: 0; padding: 0; background: #1a1a1a; }
.vars li { display: grid; grid-template-columns: 161px 20px 83px 12px 15px; align-items: center; padding-left: 19px; letter-spacing: .2px; }
.vars li i { width: 12px; height: 6px; border-radius: 3px; margin-left: 2px; }
.vars li .arr { margin-left: 0; }
.vars.widgets li { height: 20px; }
.vars.widgets li i { margin-left: 0; }
.vars.typed li { height: 26px; }
.vars em { width: 83px; overflow: hidden; }
.vars .bell { width: 12px; height: 14px; margin-left: 10px; }
.vars .eye { width: 16px; height: 8px; margin-left: 23px; }
.widgets .bell { color: #5a5a5a; }
.obj { background: #00a6f4; }
.str { background: #ff00d4; }
.bool { background: #940000; }
.struct { background: #0056cc; }
.rest { flex: 1; background: #1a1a1a; }

/* graph area */
.right { width: 1570px; display: flex; flex-direction: column; }
.tabs { display: flex; height: 25px; }
.gtab { display: flex; align-items: center; width: 162px; padding: 0 0 2px 7px; gap: 8px; }
.gtab.on { width: 160px; padding-left: 5px; background: linear-gradient(90deg, #242424, #0070e0 50%, #242424) top / 100% 1px no-repeat #242424; border-radius: 4px 4px 0 0; color: #fff; }
.gtab.on span { width: 102px; }
.graph { position: relative; height: 686px; overflow: hidden; }
.graph::after { content: ""; position: absolute; inset: 0; box-shadow: inset 0 0 40px rgba(0,0,0,.35); pointer-events: none; }
.ctitle { font-size: 12.800px; font-weight: 700; fill: #ddd; }
.ctitle .c12 { font-size: 12.300px; }
.nt { font-size: 7.500px; font-weight: 700; fill: #a9b9c2; }
.nt.off { fill: #87696a; }
.pt { font-size: 6px; fill: #c8c8c8; }
.pt.off { fill: #888; }
.val { font-size: 7px; }
.st { font-size: 8px; font-weight: 700; fill: #bbb; text-anchor: middle; }
.dev { font-size: 7.500px; fill: #bbb; text-anchor: middle; }
.get { font-size: 11px; font-weight: 700; fill: #999; }
.bub { fill: #6a6a6a; fill-opacity: .38; }
.bt { font-size: 13px; fill: #ccc; letter-spacing: .03px; }
.wm { font-size: 60px; font-weight: 700; fill: #fff; fill-opacity: .2; }
.crumbs { position: absolute; inset: 0 0 auto 0; display: flex; align-items: center; height: 38px; padding: 0 5px 0 7px; background: rgba(0,0,0,.55); }
.crumbs .ch { margin-left: 8px; }
.crumbs i { width: 2px; height: 34px; background: #1c1c1c; margin: 0 8px 0 10px; }
.crumbs .back { color: #fff; }
.crumbs .fwd { color: #777; transform: scaleX(-1); margin-left: 20px; }
.crumbs i.b { margin: 0 12px 0 10px; }
.c1, .c2 { font-size: 18px; line-height: 22px; color: #808080; }
.c1 { width: 68px; margin-left: 15px; }
.c2 { margin-left: 9px; padding-bottom: 4px; letter-spacing: .7px; }
.zoom { margin-left: auto; font-size: 21px; font-weight: 700; line-height: 24px; color: #3d3d3d; padding-bottom: 1px; }
.tip { position: absolute; left: 366px; top: 588px; width: 186px; height: 50px; padding: 8px 0 0 9px; background: #f0f0f0; border: 2px solid #080808; color: #111; font-size: 13px; line-height: 14px; }
.tip span { font-size: 12.300px; letter-spacing: -.05px; }

/* search results */
.results { flex: 1; display: flex; flex-direction: column; padding-top: 5px; }
.rtab { display: flex; align-items: center; width: 159px; height: 25px; padding: 0 0 2px 5px; background: #242424; border-radius: 4px 4px 0 0; flex: none; }
.rtab span { width: 118px; padding-left: 6px; }
.rbody { flex: 1; background: #242424; padding: 7px 2px 0; }
.rbar { display: flex; gap: 5px; margin-left: 8px; height: 27px; }
.rsearch { display: flex; align-items: center; gap: 7px; width: 1498px; height: 22px; padding-left: 5px; border: 1px solid #383838; border-radius: 11px; background: #0f0f0f; letter-spacing: .05px; }
.bino { display: flex; align-items: center; justify-content: center; width: 45px; height: 22px; background: #383838; border: 1px solid #151515; border-radius: 4px; }
.rlist { height: 101px; background: #1a1a1a; }

/* status bar */
.status { display: flex; gap: 2px; height: 32px; }
.cell { display: flex; align-items: center; background: #242424; }
.c-drawer { width: 153px; padding-left: 11px; gap: 3px; }
.c-log { width: 90px; padding-left: 11px; gap: 6px; }
.c-cmd { width: 398px; padding-left: 14px; gap: 4px; }
.c-cmd > svg:nth-child(3) { margin-left: 2px; }
.cmdin { width: 300px; height: 22px; margin-left: 9px; padding: 1px 0 0 8px; background: #0f0f0f; border: 1px solid #383838; border-radius: 4px; font-size: 12px; }
.grow { flex: 1; }
.c-save { width: 141px; padding-left: 12px; gap: 5px; }
.c-rev { width: 199px; padding-left: 15px; gap: 7px; margin-right: 3px; }
```
